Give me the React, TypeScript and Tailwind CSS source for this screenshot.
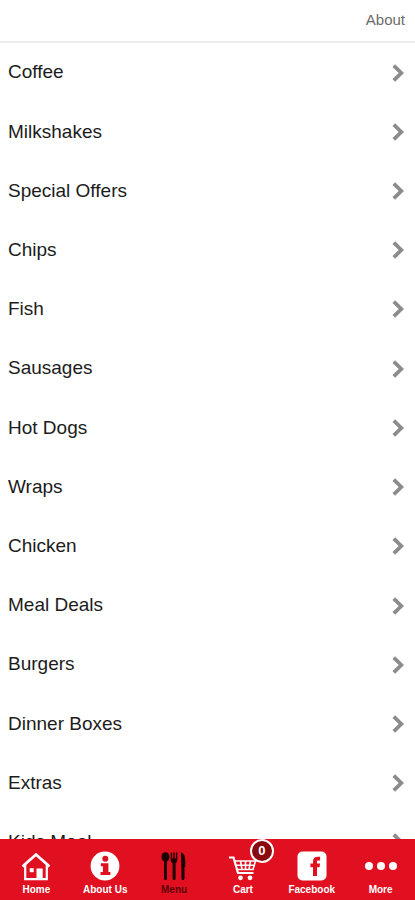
import type { ReactNode } from "react";

const categories = [
  "Coffee",
  "Milkshakes",
  "Special Offers",
  "Chips",
  "Fish",
  "Sausages",
  "Hot Dogs",
  "Wraps",
  "Chicken",
  "Meal Deals",
  "Burgers",
  "Dinner Boxes",
  "Extras",
  "Kids Meal",
];

function Chevron() {
  return (
    <svg width="12" height="18" viewBox="0 0 12 18" fill="none" stroke="#8c8c8c" strokeWidth="3.8" aria-hidden="true">
      <path d="M1.8 1.6 9.3 9l-7.5 7.4" />
    </svg>
  );
}

function HomeIcon() {
  return (
    <svg width="30" height="30" viewBox="0 0 30 30" fill="none" stroke="currentColor" aria-hidden="true">
      <path d="M1.5 15.5 15 3.5l13.5 12" strokeWidth="2.8" />
      <path d="M4.2 14v14.2h21.6V14" strokeWidth="2.2" />
      <path d="M15.5 17.5h6.2V28h-6.2z" fill="currentColor" stroke="none" />
      <path d="M8.7 17.2h4v4h-4z" fill="currentColor" stroke="none" />
    </svg>
  );
}

function InfoIcon() {
  return (
    <svg width="30" height="30" viewBox="0 0 30 30" fill="currentColor" aria-hidden="true">
      <circle cx="15" cy="15" r="14.4" />
      <g fill="#e01020">
        <circle cx="15.3" cy="7.8" r="3" />
        <path d="M10.8 12.3h7.6v8.7h2v3h-9.9v-3h2.4v-5.7h-2.1z" />
      </g>
    </svg>
  );
}

function CutleryIcon() {
  return (
    <svg width="30" height="30" viewBox="0 0 30 30" fill="currentColor" aria-hidden="true">
      <ellipse cx="6.5" cy="6" rx="4" ry="4.8" />
      <path d="M5 9h3v18.5a1.500 1.500 0 0 1-3 0z" />
      <path d="M11.7 1.500h1.400v6h1.200v-6h1.400v6h1.200v-6h1.400V9c0 1.600-.7 2.600-1.700 3v15.500a1.500 1.500 0 0 1-3 0V12c-1.200-.4-1.900-1.400-1.900-3z" />
      <path d="M22 1.500c3 .5 4.300 4 4.300 8.500v6h-.8v11.500a1.500 1.500 0 0 1-3 0z" />
    </svg>
  );
}

function CartIcon() {
  return (
    <svg width="30" height="30" viewBox="0 0 30 30" fill="none" stroke="currentColor" aria-hidden="true">
      <path d="M1 6.500h4.500L10 22h15.500" strokeWidth="2.2" />
      <path d="M6.700 10h20.800L25 18.500H9.200M8 14.200h18M12.500 10l1.500 8.500M17.500 10v8.500M22.500 10 21 18.500" strokeWidth="1.600" />
      <circle cx="12.500" cy="26.800" r="2.400" fill="currentColor" stroke="none" />
      <circle cx="22" cy="26.800" r="2.400" fill="currentColor" stroke="none" />
    </svg>
  );
}

function FacebookIcon() {
  return (
    <svg width="30" height="30" viewBox="0 0 30 30" fill="currentColor" aria-hidden="true">
      <rect x="0.5" y="0.5" width="29" height="29" rx="5" />
      <path
        d="M16 25v-8.700h-2.600v-3.800H16v-2.200c0-3 1.700-4.600 4.500-4.600h2.600v3.700h-1.700c-1 0-1.400.5-1.400 1.400v1.700h3l-.4 3.800H20V25z"
        fill="#e01020"
      />
    </svg>
  );
}

function MoreIcon() {
  return (
    <svg width="34" height="30" viewBox="0 0 34 30" fill="currentColor" aria-hidden="true">
      <circle cx="5" cy="15" r="4" />
      <circle cx="17" cy="15" r="4" />
      <circle cx="29" cy="15" r="4" />
    </svg>
  );
}

type Tab = { label: string; icon: ReactNode; active?: boolean; badge?: number };

const tabs: Tab[] = [
  { label: "Home", icon: <HomeIcon /> },
  { label: "About Us", icon: <InfoIcon /> },
  { label: "Menu", icon: <CutleryIcon />, active: true },
  { label: "Cart", icon: <CartIcon />, badge: 0 },
  { label: "Facebook", icon: <FacebookIcon /> },
  { label: "More", icon: <MoreIcon /> },
];

export default function App() {
  return (
    <div className="flex h-dvh flex-col bg-white font-['Liberation_Sans',Arial,sans-serif]">
      <header className="flex h-[43px] shrink-0 items-center justify-end border-b-2 border-[#ededed] px-[10px]">
        <button type="button" className="text-[15px] text-[#6b6b6b]">
          About
        </button>
      </header>

      <main className="min-h-0 flex-1 overflow-y-auto [scrollbar-width:none]">
        <ul className="grid h-[829px] auto-rows-fr">
          {categories.map((name) => (
            <li key={name}>
              <a href="#" className="flex h-full items-center justify-between pr-[11px] pl-2 text-[19px] text-[#1c1c1c]">
                {name}
                <Chevron />
              </a>
            </li>
          ))}
        </ul>
      </main>

      <nav className="grid h-[61px] shrink-0 grid-cols-6 bg-[#e01020] pl-0.5">
        {tabs.map(({ label, icon, active, badge }) => (
          <a
            key={label}
            href="#"
            aria-current={active ? "page" : undefined}
            className={`flex flex-col items-center pt-3 text-[10px] leading-4 font-bold ${active ? "text-[#5c0008]" : "text-white"}`}
          >
            <span className={`relative mb-px ${active ? "text-[#1a0002]" : ""}`}>
              {icon}
              {badge !== undefined && (
                <span className="absolute -top-3 -right-4 flex size-6 items-center justify-center rounded-full border-2 border-white bg-[#8a0a10] text-[13px] text-white">
                  {badge}
                </span>
              )}
            </span>
            {label}
          </a>
        ))}
      </nav>
    </div>
  );
}
